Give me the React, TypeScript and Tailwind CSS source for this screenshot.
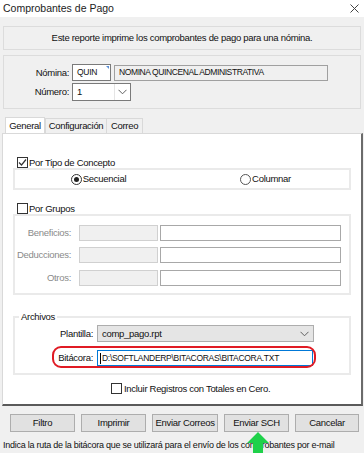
import React from "react";

const Chevron = () => (
  <svg width="9" height="6" viewBox="0 0 9 6" className="shrink-0">
    <polyline points="0.5,0.8 4.5,4.8 8.5,0.8" fill="none" stroke="#606060" strokeWidth="1" />
  </svg>
);

const CheckBox = ({ checked }: { checked?: boolean }) => (
  <div className="w-[11px] h-[11px] border border-[#333333] bg-white flex items-center justify-center shrink-0">
    {checked && (
      <svg width="9" height="9" viewBox="0 0 9 9">
        <polyline points="1,4.5 3.5,7 8,1.5" fill="none" stroke="#333333" strokeWidth="1.2" />
      </svg>
    )}
  </div>
);

const Radio = ({ checked }: { checked?: boolean }) => (
  <div
    className={`w-[11px] h-[11px] rounded-full border bg-white flex items-center justify-center shrink-0 ${
      checked ? "border-[#333333]" : "border-[#555555]"
    }`}
  >
    {checked && <div className="w-[5px] h-[5px] rounded-full bg-[#222222]" />}
  </div>
);

const Row = ({ label }: { label: string }) => (
  <div className="flex items-center h-[16px]">
    <div className="w-[57px] text-right text-[#8a8a8a] pr-[1px]">{label}</div>
    <div className="w-[79px] h-[16px] ml-[7px] bg-[#f0f0f0] border border-[#d0d0d0]" />
    <div className="w-[181px] h-[16px] ml-[2px] bg-white border border-[#a8a8a8]" />
  </div>
);

const Btn = ({ label, w }: { label: string; w: string }) => (
  <div className={`${w} h-[18px] bg-[#e1e1e1] border border-[#adadad] flex items-center justify-center text-[#111] whitespace-nowrap`}>
    {label}
  </div>
);

export default function App() {
  return (
    <div
      className="relative w-[364px] h-[453px] bg-[#f0f0f0] overflow-hidden text-[9.5px] tracking-[-0.3px] leading-none text-[#111]"
      style={{ fontFamily: '"Liberation Sans", Arial, sans-serif' }}
    >
      {/* title bar */}
      <div className="h-[17px] bg-white flex items-center justify-between pl-[3px] pr-[5px]">
        <span className="text-[10.5px] tracking-normal text-[#222]">Comprobantes de Pago</span>
        <svg width="9" height="9" viewBox="0 0 9 9">
          <path d="M0.5 0.5 L8.5 8.5 M8.5 0.5 L0.5 8.5" stroke="#444" strokeWidth="1" />
        </svg>
      </div>

      {/* description panel */}
      <div className="mx-[3px] mt-[9px] h-[24px] border border-[#dcdcdc] flex items-center justify-center">
        Este reporte imprime los comprobantes de pago para una nómina.
      </div>

      {/* nomina panel */}
      <div className="mx-[3px] mt-[5px] h-[54px] border border-[#dcdcdc] pt-[8px]">
        <div className="flex items-center h-[17px]">
          <div className="w-[65px] text-right">Nómina:</div>
          <div className="relative ml-[3px] w-[39px] h-[17px] bg-white border border-[#7a7a7a] flex items-center pl-[4px] text-[8.5px] tracking-[-0.3px]">
            QUIN
            <div className="absolute right-[1px] top-[1px] w-0 h-0 border-l-[3px] border-l-transparent border-t-[3px] border-t-[#5b8fd6]" />
          </div>
          <div className="ml-[3px] w-[214px] h-[16px] bg-[#f0f0f0] border border-[#a0a0a0] flex items-center pl-[4px] text-[8.5px] tracking-[-0.4px]">
            NOMINA QUINCENAL ADMINISTRATIVA
          </div>
        </div>
        <div className="flex items-center h-[18px] mt-[2px]">
          <div className="w-[65px] text-right">Número:</div>
          <div className="ml-[3px] w-[59px] h-[18px] bg-white border border-[#7a7a7a] flex items-center justify-between pl-[4px] pr-[3px]">
            <span>1</span>
            <div className="h-[16px] border-l border-[#e5e5e5] pl-[3px] flex items-center">
              <Chevron />
            </div>
          </div>
        </div>
      </div>

      {/* tabs */}
      <div className="mt-[9px] ml-[5px] flex h-[15px] items-end">
        <div className="w-[40px] h-[16px] bg-white border border-b-0 border-[#d9d9d9] flex items-center justify-center">General</div>
        <div className="w-[62px] h-[15px] border border-b-0 border-[#d9d9d9] bg-[#f0f0f0] flex items-center justify-center">Configuración</div>
        <div className="w-[36px] h-[15px] border border-b-0 border-l-0 border-[#d9d9d9] bg-[#f0f0f0] flex items-center justify-center">Correo</div>
      </div>

      <div className="ml-[2px] w-[361px] h-[273px] bg-white border-l border-t border-[#d9d9d9] border-r-2 border-r-[#6b6b6b] border-b-2 border-b-[#5a5a5a] relative">
        {/* Por Tipo de Concepto */}
        <div className="mt-[23px] ml-[14px] flex items-center gap-[1px] h-[11px]">
          <CheckBox checked />
          <span>Por Tipo de Concepto</span>
        </div>
        <div className="ml-[10px] w-[338px] h-[22px] border-2 border-[#eaeaea] flex items-center">
          <div className="flex-1 flex items-center justify-center gap-[1px]">
            <Radio checked />
            <span>Secuencial</span>
          </div>
          <div className="flex-1 flex items-center justify-center gap-[1px]">
            <Radio />
            <span>Columnar</span>
          </div>
        </div>

        {/* Por Grupos */}
        <div className="mt-[13px] ml-[14px] flex items-center gap-[1px] h-[11px]">
          <CheckBox />
          <span>Por Grupos</span>
        </div>
        <div className="ml-[10px] w-[338px] h-[81px] border-2 border-[#eaeaea] pt-[9px] flex flex-col gap-[6px]">
          <Row label="Beneficios:" />
          <Row label="Deducciones:" />
          <div className="mt-[1px]">
            <Row label="Otros:" />
          </div>
        </div>

        {/* Archivos */}
        <div className="relative mt-[21px] ml-[10px] w-[338px] h-[59px] border-2 border-[#eaeaea]">
          <div className="absolute -top-[6px] left-[4px] bg-white px-[2px] leading-[10px]">Archivos</div>
          <div className="flex items-center mt-[7px] h-[17px]">
            <div className="w-[78px] text-right">Plantilla:</div>
            <div className="ml-[4px] w-[217px] h-[17px] bg-[#e5e5e5] border border-[#adadad] flex items-center justify-between pl-[4px] pr-[4px]">
              <span>comp_pago.rpt</span>
              <Chevron />
            </div>
          </div>
          <div className="flex items-center mt-[8px] h-[16px]">
            <div className="w-[78px] text-right">Bitácora:</div>
            <div className="ml-[4px] w-[216px] h-[16px] bg-white border border-[#0078d7] flex items-center pl-[2px]">
              <span className="w-px h-[11px] bg-black mr-[1px]" />
              <span className="text-[8.5px] tracking-[-0.3px]">D:\SOFTLANDERP\BITACORAS\BITACORA.TXT</span>
            </div>
          </div>
        </div>

        {/* Incluir */}
        <div className="mt-[8px] ml-[108px] flex items-center gap-[2px] h-[11px]">
          <CheckBox />
          <span>Incluir Registros con Totales en Cero.</span>
        </div>
      </div>

      {/* buttons */}
      <div className="mt-[8px] ml-[10px] flex gap-[6px]">
        <Btn label="Filtro" w="w-[65px]" />
        <Btn label="Imprimir" w="w-[65px]" />
        <Btn label="Enviar Correos" w="w-[66px]" />
        <Btn label="Enviar SCH" w="w-[65px]" />
        <Btn label="Cancelar" w="w-[64px]" />
      </div>

      <div className="mt-[9px] ml-[3px] whitespace-nowrap text-[9px] tracking-[-0.25px]">
        Indica la ruta de la bitácora que se utilizará para el envío de los comprobantes por e-mail
      </div>

      {/* red highlight oval */}
      <div className="absolute left-[52px] top-[346px] w-[264px] h-[22px] border-2 border-[#e01b24] rounded-[9px]" />

      {/* green arrow */}
      <svg className="absolute left-[246px] top-[432px]" width="24" height="21" viewBox="0 0 24 21">
        <polygon points="12,0 23,11 17,11 17,21 7,21 7,11 1,11" fill="#1fd14a" />
      </svg>
    </div>
  );
}
